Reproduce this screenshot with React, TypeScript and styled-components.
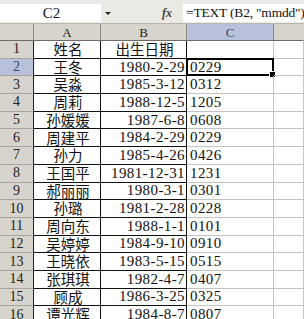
import React from "react";
import styled, { createGlobalStyle } from "styled-components";

const GlobalStyle = createGlobalStyle`
  html, body {
    margin: 0;
    padding: 0;
    background: #ffffff;
  }
`;

const ROW_H = 17.7;
const COLS = "34px 67px 86px 87px 30px";

const Sheet = styled.div`
  width: 304px;
  height: 319px;
  overflow: hidden;
  background: #ffffff;
  font-family: "Liberation Serif", "Noto Sans CJK SC", serif;
  color: #111;
`;

const FormulaBar = styled.div`
  height: 24px;
  background: #ebe9e4;
  display: flex;
  align-items: flex-start;
  padding-top: 4px;
  box-sizing: border-box;
  border-bottom: 1px solid #b9b6ae;
  & > * {
    flex-shrink: 0;
  }
`;

const NameBox = styled.div`
  width: 101px;
  height: 18px;
  background: #ffffff;
  display: flex;
  align-items: center;
  justify-content: center;
  font-size: 15px;
  padding-left: 2px;
  box-sizing: border-box;
`;

const DropArrow = styled.div`
  width: 14px;
  height: 18px;
  display: flex;
  align-items: center;
  justify-content: center;
  &::after {
    content: "";
    border-left: 3px solid transparent;
    border-right: 3px solid transparent;
    border-top: 3px solid #222;
  }
`;

const Fx = styled.div`
  width: 68px;
  height: 18px;
  display: flex;
  align-items: center;
  justify-content: flex-end;
  padding-right: 11px;
  box-sizing: border-box;
  font-style: italic;
  font-weight: bold;
  font-size: 12px;
  color: #444;
`;

const Input = styled.div`
  flex: 1 1 auto;
  min-width: 0;
  overflow: hidden;
  height: 18px;
  background: #ffffff;
  display: flex;
  align-items: center;
  padding-left: 3px;
  font-size: 13.5px;
  white-space: nowrap;
  letter-spacing: -0.2px;
`;

const Grid = styled.div`
  display: grid;
  grid-template-columns: ${COLS};
  grid-auto-rows: ${ROW_H}px;
  grid-template-rows: 17px;
`;

const Head = styled.div<{ $active?: boolean; $last?: boolean }>`
  background: ${(p) => (p.$active ? "#b7c1d9" : "#d7d4cd")};
  border-right: 1px solid ${(p) => (p.$last ? "transparent" : "#8e8b84")};
  border-bottom: 1px solid #6f6c66;
  display: flex;
  align-items: center;
  justify-content: center;
  font-size: 13px;
  line-height: 1;
  color: ${(p) => (p.$active ? "#3d4a66" : "#222")};
  box-sizing: border-box;
`;

const RowHead = styled(Head)`
  font-size: 14px;
  border-bottom: 1px solid #a9a59d;
  border-right: 1px solid #222;
`;

const Cell = styled.div<{ $align?: "left" | "center" | "right"; $strong?: boolean; $cjk?: boolean }>`
  display: flex;
  align-items: center;
  justify-content: ${(p) =>
    p.$align === "right" ? "flex-end" : p.$align === "center" ? "center" : "flex-start"};
  padding: 0 1px 0 3px;
  box-sizing: border-box;
  border-right: 1px solid ${(p) => (p.$strong ? "#111" : "#c4c4c4")};
  border-bottom: 1px solid ${(p) => (p.$strong ? "#111" : "#c4c4c4")};
  font-family: ${(p) =>
    p.$cjk ? `"Noto Sans CJK SC", sans-serif` : `"Liberation Serif", serif`};
  font-size: ${(p) => (p.$cjk ? "14.5px" : "15px")};
  line-height: 1;
  letter-spacing: ${(p) => (p.$cjk ? "0" : "0.4px")};
  white-space: nowrap;
  position: relative;
`;

const Selection = styled.div`
  position: absolute;
  left: -1px;
  top: -1px;
  right: -1px;
  bottom: -1px;
  border: 2px solid #000;
  pointer-events: none;
  &::after {
    content: "";
    position: absolute;
    right: -4px;
    bottom: -4px;
    width: 5px;
    height: 5px;
    background: #000;
    border: 1px solid #fff;
  }
`;

const rows: [string, string, string][] = [
  ["王冬", "1980-2-29", "0229"],
  ["吴淼", "1985-3-12", "0312"],
  ["周莉", "1988-12-5", "1205"],
  ["孙媛媛", "1987-6-8", "0608"],
  ["周建平", "1984-2-29", "0229"],
  ["孙力", "1985-4-26", "0426"],
  ["王国平", "1981-12-31", "1231"],
  ["郝丽丽", "1980-3-1", "0301"],
  ["孙璐", "1981-2-28", "0228"],
  ["周向东", "1988-1-1", "0101"],
  ["吴婷婷", "1984-9-10", "0910"],
  ["王晓依", "1983-5-15", "0515"],
  ["张琪琪", "1982-4-7", "0407"],
  ["顾成", "1986-3-25", "0325"],
  ["谭光辉", "1984-8-7", "0807"],
];

export default function App() {
  return (
    <Sheet>
      <GlobalStyle />
      <FormulaBar>
        <NameBox>C2</NameBox>
        <DropArrow />
        <Fx>fx</Fx>
        <Input>=TEXT (B2, "mmdd")</Input>
      </FormulaBar>
      <Grid>
        <Head />
        <Head>A</Head>
        <Head>B</Head>
        <Head $active>C</Head>
        <Head $last />

        <RowHead>1</RowHead>
        <Cell $align="center" $strong $cjk>姓名</Cell>
        <Cell $align="center" $strong $cjk>出生日期</Cell>
        <Cell />
        <Cell />

        {rows.map(([name, date, code], i) => (
          <React.Fragment key={i}>
            <RowHead $active={i === 0}>{i + 2}</RowHead>
            <Cell $align="center" $strong $cjk>{name}</Cell>
            <Cell $align="right" $strong>{date}</Cell>
            <Cell>
              {code}
              {i === 0 && <Selection />}
            </Cell>
            <Cell />
          </React.Fragment>
        ))}
      </Grid>
    </Sheet>
  );
}
